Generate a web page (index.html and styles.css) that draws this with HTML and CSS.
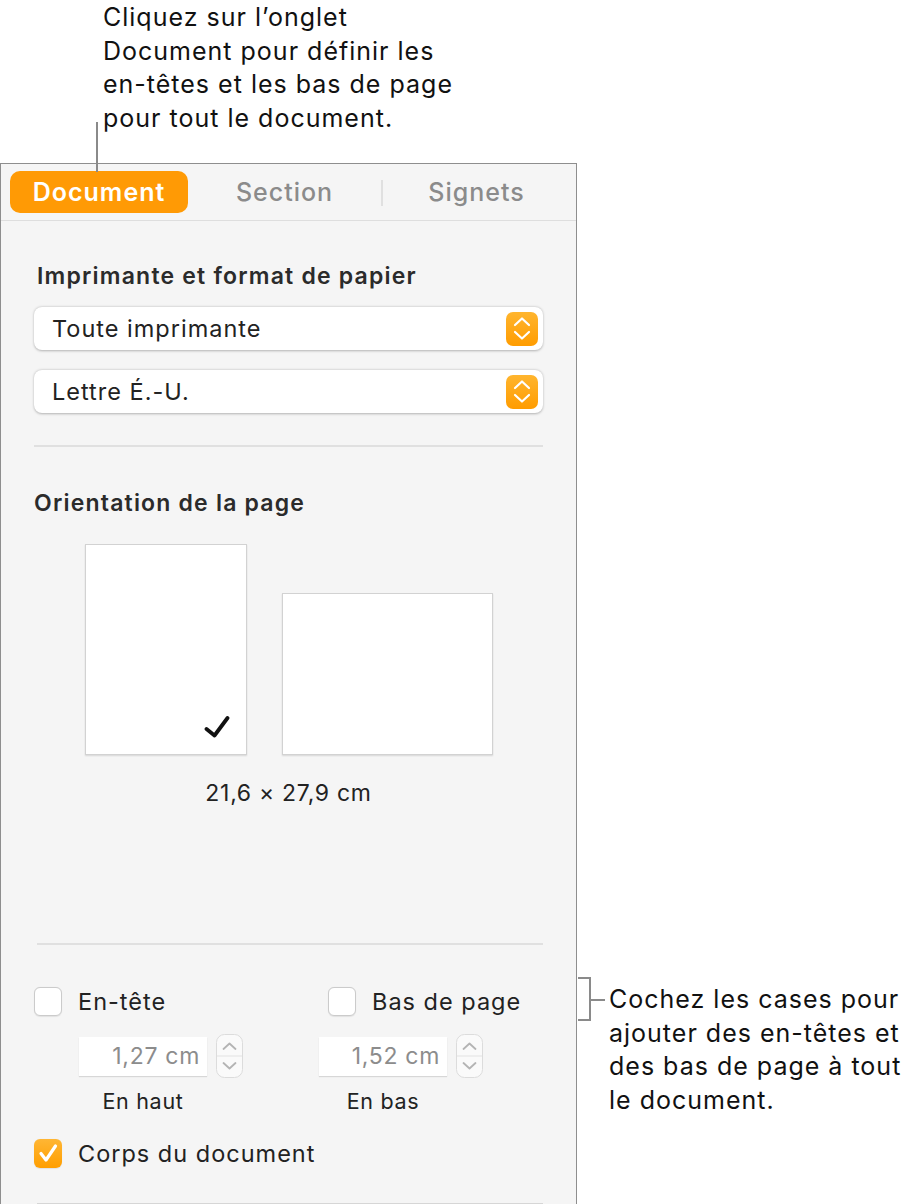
FILE: index.html
```html
<!DOCTYPE html>
<html lang="fr">
<head>
<meta charset="utf-8">
<title>Document</title>
<link rel="stylesheet" href="styles.css">
</head>
<body>
<div class="page">
  <div class="left">
    <div class="note-top">
      <p class="note-text">Cliquez sur l’onglet<br>Document pour définir les<br>en-têtes et les bas de page<br>pour tout le document.</p>
      <span class="leader"></span>
    </div>
    <div class="panel">
      <div class="tabs">
        <div class="tab tab-active">Document</div>
        <div class="tab">Section</div>
        <div class="tab tab-sep">Signets</div>
      </div>
      <div class="content">
        <h2 class="heading h-first">Imprimante et format de papier</h2>
        <div class="popup p-first">
          <span>Toute imprimante</span>
          <svg class="popup-icon" viewBox="0 0 32 34" width="32" height="34">
            <defs><linearGradient id="og" x1="0" y1="0" x2="0" y2="1"><stop offset="0" stop-color="#ffb52e"/><stop offset="1" stop-color="#ff9c00"/></linearGradient></defs>
            <rect x="0" y="0" width="32" height="34" rx="7" fill="url(#og)"/>
            <path d="M9 13 L16 6.5 L23 13" fill="none" stroke="#fff" stroke-width="2.2" stroke-linecap="round" stroke-linejoin="round"/>
            <path d="M9 20 L16 26.5 L23 20" fill="none" stroke="#fff" stroke-width="2.2" stroke-linecap="round" stroke-linejoin="round"/>
          </svg>
        </div>
        <div class="popup p-second">
          <span>Lettre É.-U.</span>
          <svg class="popup-icon" viewBox="0 0 32 34" width="32" height="34">
            <rect x="0" y="0" width="32" height="34" rx="7" fill="url(#og)"/>
            <path d="M9 13 L16 6.5 L23 13" fill="none" stroke="#fff" stroke-width="2.2" stroke-linecap="round" stroke-linejoin="round"/>
            <path d="M9 20 L16 26.5 L23 20" fill="none" stroke="#fff" stroke-width="2.2" stroke-linecap="round" stroke-linejoin="round"/>
          </svg>
        </div>
        <div class="sep sep-1"></div>
        <h2 class="heading h-second">Orientation de la page</h2>
        <div class="orient">
          <div class="sheet sheet-portrait">
            <svg class="sheet-check" viewBox="0 0 26 22" width="26" height="22">
              <path d="M2.5 13 L10.5 19.5 L23.5 2" fill="none" stroke="#111" stroke-width="3.8" stroke-linecap="round" stroke-linejoin="round"/>
            </svg>
          </div>
          <div class="sheet sheet-landscape"></div>
        </div>
        <p class="dims">21,6 × 27,9 cm</p>
        <div class="sep sep-2"></div>
        <div class="checks">
          <label class="check"><span class="box"></span><span>En-tête</span></label>
          <label class="check"><span class="box"></span><span>Bas de page</span></label>
        </div>
        <div class="fields">
          <div class="field-group">
            <div class="field-row">
              <div class="num">1,27 cm</div>
              <svg class="stepper" viewBox="0 0 27 44" width="27" height="44">
                <rect x="0.5" y="0.5" width="26" height="43" rx="8" fill="#fafafa" stroke="#dcdcdc"/>
                <line x1="1" y1="22" x2="26" y2="22" stroke="#e2e2e2"/>
                <path d="M7.5 15 L13.5 9.5 L19.5 15" fill="none" stroke="#b4b4b4" stroke-width="1.8" stroke-linecap="round" stroke-linejoin="round"/>
                <path d="M7.5 29 L13.5 34.5 L19.5 29" fill="none" stroke="#b4b4b4" stroke-width="1.8" stroke-linecap="round" stroke-linejoin="round"/>
              </svg>
            </div>
            <div class="field-label">En haut</div>
          </div>
          <div class="field-group">
            <div class="field-row">
              <div class="num">1,52 cm</div>
              <svg class="stepper" viewBox="0 0 27 44" width="27" height="44">
                <rect x="0.5" y="0.5" width="26" height="43" rx="8" fill="#fafafa" stroke="#dcdcdc"/>
                <line x1="1" y1="22" x2="26" y2="22" stroke="#e2e2e2"/>
                <path d="M7.5 15 L13.5 9.5 L19.5 15" fill="none" stroke="#b4b4b4" stroke-width="1.8" stroke-linecap="round" stroke-linejoin="round"/>
                <path d="M7.5 29 L13.5 34.5 L19.5 29" fill="none" stroke="#b4b4b4" stroke-width="1.8" stroke-linecap="round" stroke-linejoin="round"/>
              </svg>
            </div>
            <div class="field-label">En bas</div>
          </div>
        </div>
        <label class="check check-body"><span class="box box-on">
          <svg viewBox="0 0 28 28" width="28" height="28"><path d="M7 14.5 L12 21 L21.5 7" fill="none" stroke="#fff" stroke-width="3.2" stroke-linecap="round" stroke-linejoin="round"/></svg>
        </span><span>Corps du document</span></label>
        <div class="sep sep-3"></div>
      </div>
    </div>
  </div>
  <div class="note-right">
    <span class="bracket"></span>
    <p class="note-text note-text-right">Cochez les cases pour<br>ajouter des en-têtes et<br>des bas de page à tout<br>le document.</p>
  </div>
</div>
</body>
</html>
```

FILE: styles.css
```css
* { box-sizing: border-box; }
html, body { margin: 0; padding: 0; background: #fff; }
body {
  font-family: Inter, "Noto Sans", "Liberation Sans", sans-serif;
  color: #1d1d1d;
  width: 918px;
  height: 1204px;
  overflow: hidden;
}
.page {
  display: grid;
  grid-template-columns: 577px 1fr;
  align-items: start;
}
.left { display: flex; flex-direction: column; }

.note-top {
  position: relative;
  height: 163px;
  padding-left: 103px;
}
.note-text {
  margin: 0;
  font-size: 25px;
  line-height: 33.6px;
  color: #111;
  letter-spacing: 1px;
  white-space: nowrap;
}
.note-top .note-text { padding-top: 1px; }
.leader {
  position: absolute;
  left: 96px;
  top: 122px;
  width: 2px;
  height: 50px;
  background: #8a8a8a;
  z-index: 2;
}

.panel {
  width: 577px;
  height: 1041px;
  background: #f5f5f5;
  border: 1px solid #8e8e8e;
  border-bottom: none;
}
.tabs {
  display: grid;
  grid-template-columns: 178px 193px 191px;
  height: 57px;
  padding: 7px 0 0 9px;
  border-bottom: 1px solid #dedede;
}
.tab {
  height: 42px;
  display: flex;
  align-items: center;
  justify-content: center;
  font-size: 25px;
  letter-spacing: 1px;
  font-weight: 500;
  color: #8b8b8b;
  position: relative;
}
.tab-active {
  background: #ff9a05;
  color: #fff;
  border-radius: 10px;
  font-weight: 600;
}
.tab-sep::before {
  content: "";
  position: absolute;
  left: 0;
  top: 9px;
  height: 26px;
  width: 2px;
  background: #e0e0e0;
}

.content { padding: 0 33px; }
.heading {
  margin: 0;
  font-size: 23px;
  line-height: 26px;
  letter-spacing: 1.2px;
  font-weight: 600;
  color: #2b2b2b;
  white-space: nowrap;
}
.h-first { margin-top: 42px; padding-left: 3px; }
.h-second { margin-top: 43px; }

.popup {
  height: 43px;
  background: #fff;
  border-radius: 8px;
  box-shadow: 0 0.5px 2.5px rgba(0,0,0,0.28);
  display: flex;
  align-items: center;
  justify-content: space-between;
  padding: 0 5px 0 18px;
  font-size: 23.5px;
  letter-spacing: 1px;
  color: #222;
}
.p-first { margin-top: 18px; }
.p-second { margin-top: 20px; }
.popup-icon { display: block; }

.sep { height: 2px; background: #e0e0e0; }
.sep-1 { margin-top: 32px; }
.sep-2 { margin-top: 138px; margin-left: 3px; }
.sep-3 { margin-top: 35px; margin-left: 3px; background: #d6d6d6; }

.orient {
  margin-top: 28px;
  padding-left: 51px;
  display: flex;
  align-items: flex-end;
  gap: 35px;
}
.sheet {
  background: #fff;
  border: 1px solid #d2d2d2;
  box-shadow: 0 1px 1.5px rgba(0,0,0,0.12);
  position: relative;
}
.sheet-portrait { width: 162px; height: 211px; }
.sheet-landscape { width: 211px; height: 162px; }
.sheet-check { position: absolute; left: 118px; top: 171px; }

.dims {
  margin: 26px 0 0;
  text-align: center;
  font-size: 23px;
  letter-spacing: 0.7px;
  line-height: 24px;
  color: #222;
}

.checks {
  margin-top: 42px;
  display: grid;
  grid-template-columns: 294px 1fr;
}
.check {
  display: flex;
  align-items: center;
  gap: 16px;
  font-size: 23.5px;
  letter-spacing: 1px;
  color: #222;
  height: 29px;
}
.box {
  width: 28px;
  height: 29px;
  border-radius: 6px;
  background: #fff;
  border: 1px solid #cbcbcb;
  box-shadow: 0 0.5px 1px rgba(0,0,0,0.08);
  display: block;
  flex: none;
}
.box-on {
  border: none;
  background: linear-gradient(#ffb634, #ff9e00);
}
.box-on svg { display: block; }

.fields {
  margin-top: 18px;
  padding-left: 45px;
  display: flex;
  gap: 76px;
}
.field-group { display: flex; flex-direction: column; }
.field-row { display: flex; align-items: center; gap: 9px; }
.num {
  width: 128px;
  height: 39px;
  background: #fff;
  box-shadow: 0 1px 1px rgba(0,0,0,0.12);
  text-align: right;
  padding-right: 7px;
  font-size: 23px;
  letter-spacing: 0.7px;
  line-height: 39px;
  color: #8c8c8c;
}
.stepper { display: block; }
.field-label {
  width: 128px;
  text-align: center;
  margin-top: 11px;
  font-size: 21.5px;
  letter-spacing: 0.7px;
  line-height: 24px;
  color: #222;
}
.check-body { margin-top: 26px; }

.note-right {
  margin-top: 977px;
  margin-left: 1px;
  display: flex;
  align-items: flex-start;
}
.bracket {
  position: relative;
  display: block;
  width: 13px;
  height: 44px;
  border: 2px solid #8a8a8a;
  border-left: none;
  flex: none;
}
.bracket::after {
  content: "";
  position: absolute;
  left: 11px;
  top: 20px;
  width: 16px;
  height: 2px;
  background: #8a8a8a;
}
.note-text-right { margin-left: 18px; margin-top: 6px; }
```
